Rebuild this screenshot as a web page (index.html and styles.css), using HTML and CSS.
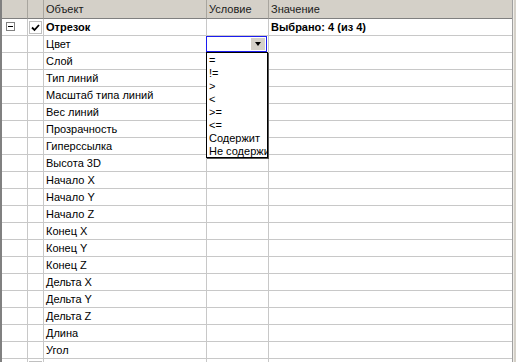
FILE: index.html
```html
<!DOCTYPE html>
<html>
<head>
<meta charset="utf-8">
<link rel="stylesheet" href="styles.css">
</head>
<body>
<div class="frame">
  <div class="grid">
    <div class="hc"></div>
    <div class="hc"></div>
    <div class="hc">Объект</div>
    <div class="hc">Условие</div>
    <div class="hc">Значение</div>

    <div class="c"><span class="exp"><span class="minus"></span></span></div>
    <div class="c"><span class="chk"><svg width="9" height="8" viewBox="0 0 9 8"><path d="M1 3.5 L3.5 6 L8 1" fill="none" stroke="#000" stroke-width="1.8"/></svg></span></div>
    <div class="c b">Отрезок</div>
    <div class="c"></div>
    <div class="c b">Выбрано: 4 (из 4)</div>

    <div class="c"></div><div class="c"></div><div class="c">Цвет</div>
    <div class="c cond">
      <div class="combo"><span class="btn"><span class="tri"></span></span></div>
      <ul class="list">
        <li>=</li><li>!=</li><li>&gt;</li><li>&lt;</li><li>&gt;=</li><li>&lt;=</li><li>Содержит</li><li>Не содержит</li>
      </ul>
    </div>
    <div class="c"></div>

    <div class="c"></div><div class="c"></div><div class="c">Слой</div><div class="c"></div><div class="c"></div>
    <div class="c"></div><div class="c"></div><div class="c">Тип линий</div><div class="c"></div><div class="c"></div>
    <div class="c"></div><div class="c"></div><div class="c">Масштаб типа линий</div><div class="c"></div><div class="c"></div>
    <div class="c"></div><div class="c"></div><div class="c">Вес линий</div><div class="c"></div><div class="c"></div>
    <div class="c"></div><div class="c"></div><div class="c">Прозрачность</div><div class="c"></div><div class="c"></div>
    <div class="c"></div><div class="c"></div><div class="c">Гиперссылка</div><div class="c"></div><div class="c"></div>
    <div class="c"></div><div class="c"></div><div class="c">Высота 3D</div><div class="c"></div><div class="c"></div>
    <div class="c"></div><div class="c"></div><div class="c">Начало X</div><div class="c"></div><div class="c"></div>
    <div class="c"></div><div class="c"></div><div class="c">Начало Y</div><div class="c"></div><div class="c"></div>
    <div class="c"></div><div class="c"></div><div class="c">Начало Z</div><div class="c"></div><div class="c"></div>
    <div class="c"></div><div class="c"></div><div class="c">Конец X</div><div class="c"></div><div class="c"></div>
    <div class="c"></div><div class="c"></div><div class="c">Конец Y</div><div class="c"></div><div class="c"></div>
    <div class="c"></div><div class="c"></div><div class="c">Конец Z</div><div class="c"></div><div class="c"></div>
    <div class="c"></div><div class="c"></div><div class="c">Дельта X</div><div class="c"></div><div class="c"></div>
    <div class="c"></div><div class="c"></div><div class="c">Дельта Y</div><div class="c"></div><div class="c"></div>
    <div class="c"></div><div class="c"></div><div class="c">Дельта Z</div><div class="c"></div><div class="c"></div>
    <div class="c"></div><div class="c"></div><div class="c">Длина</div><div class="c"></div><div class="c"></div>
    <div class="c"></div><div class="c"></div><div class="c">Угол</div><div class="c"></div><div class="c"></div>

    <div class="c"></div>
    <div class="c"><span class="chk"></span></div>
    <div class="c b"></div><div class="c"></div><div class="c"></div>
  </div>
  <div class="side"></div>
</div>
</body>
</html>
```

FILE: styles.css
```css
html, body {
  margin: 0;
  padding: 0;
  width: 516px;
  height: 362px;
  overflow: hidden;
  background: #d4d0c8;
  font-family: "Liberation Sans", Arial, sans-serif;
  font-size: 11px;
  color: #000;
}

.frame {
  display: flex;
  height: 362px;
}

.grid {
  display: grid;
  grid-template-columns: 26px 16px 163px 62px 243px;
  grid-auto-rows: 17px;
  grid-template-rows: 19px;
  align-content: start;
  background: #fff;
  border-left: 2px solid #808080;
  border-right: 1px solid #a0a0a0;
}

.hc {
  background: #d4d0c8;
  border-bottom: 1px solid #808080;
  border-right: 1px solid #a8a59e;
  box-sizing: border-box;
  padding: 3px 0 0 2px;
  color: #1a1a1a;
  white-space: nowrap;
  overflow: hidden;
}

.c {
  box-sizing: border-box;
  border-bottom: 1px solid #c8c8c8;
  border-right: 1px solid #c8c8c8;
  padding: 2px 0 0 2px;
  white-space: nowrap;
  position: relative;
}

.grid > :nth-child(5n) {
  border-right: none;
}

.b {
  font-weight: bold;
}

.exp {
  display: block;
  width: 9px;
  height: 9px;
  box-sizing: border-box;
  border: 1px solid #808080;
  background: #fff;
  margin: 1px 0 0 2px;
  position: relative;
}

.minus {
  display: block;
  width: 5px;
  height: 1px;
  background: #000;
  margin: 3px 0 0 1px;
}

.chk {
  display: flex;
  align-items: center;
  justify-content: center;
  width: 13px;
  height: 13px;
  box-sizing: border-box;
  border: 1px solid #c0c0c0;
  background: #fff;
  margin: 0 0 0 -1px;
}

.cond {
  overflow: visible;
}

.combo {
  position: absolute;
  left: -1px;
  top: 0;
  width: 61px;
  height: 16px;
  box-sizing: border-box;
  border: 1px solid #1c1cf0;
  background: #fff;
  display: flex;
  justify-content: flex-end;
  align-items: center;
  padding-right: 1px;
  z-index: 2;
}

.btn {
  width: 14px;
  height: 12px;
  background: #d4d0c8;
  display: flex;
  align-items: center;
  justify-content: center;
}

.tri {
  width: 0;
  height: 0;
  border-left: 3.5px solid transparent;
  border-right: 3.5px solid transparent;
  border-top: 4px solid #000;
}

.list {
  position: absolute;
  left: -1px;
  top: 16px;
  width: 62px;
  height: 106px;
  box-sizing: border-box;
  margin: 0;
  padding: 1px 0 0 0;
  list-style: none;
  border: 1px solid #000;
  background: #fff;
  overflow: hidden;
  z-index: 3;
  box-shadow: 1px 1px 0 #555;
}

.list li {
  height: 13px;
  line-height: 13px;
  padding-left: 2px;
  white-space: nowrap;
}

.side {
  flex: 1;
  background: #d4d0c8;
  border-left: 1px solid #f0eee9;
}
```
